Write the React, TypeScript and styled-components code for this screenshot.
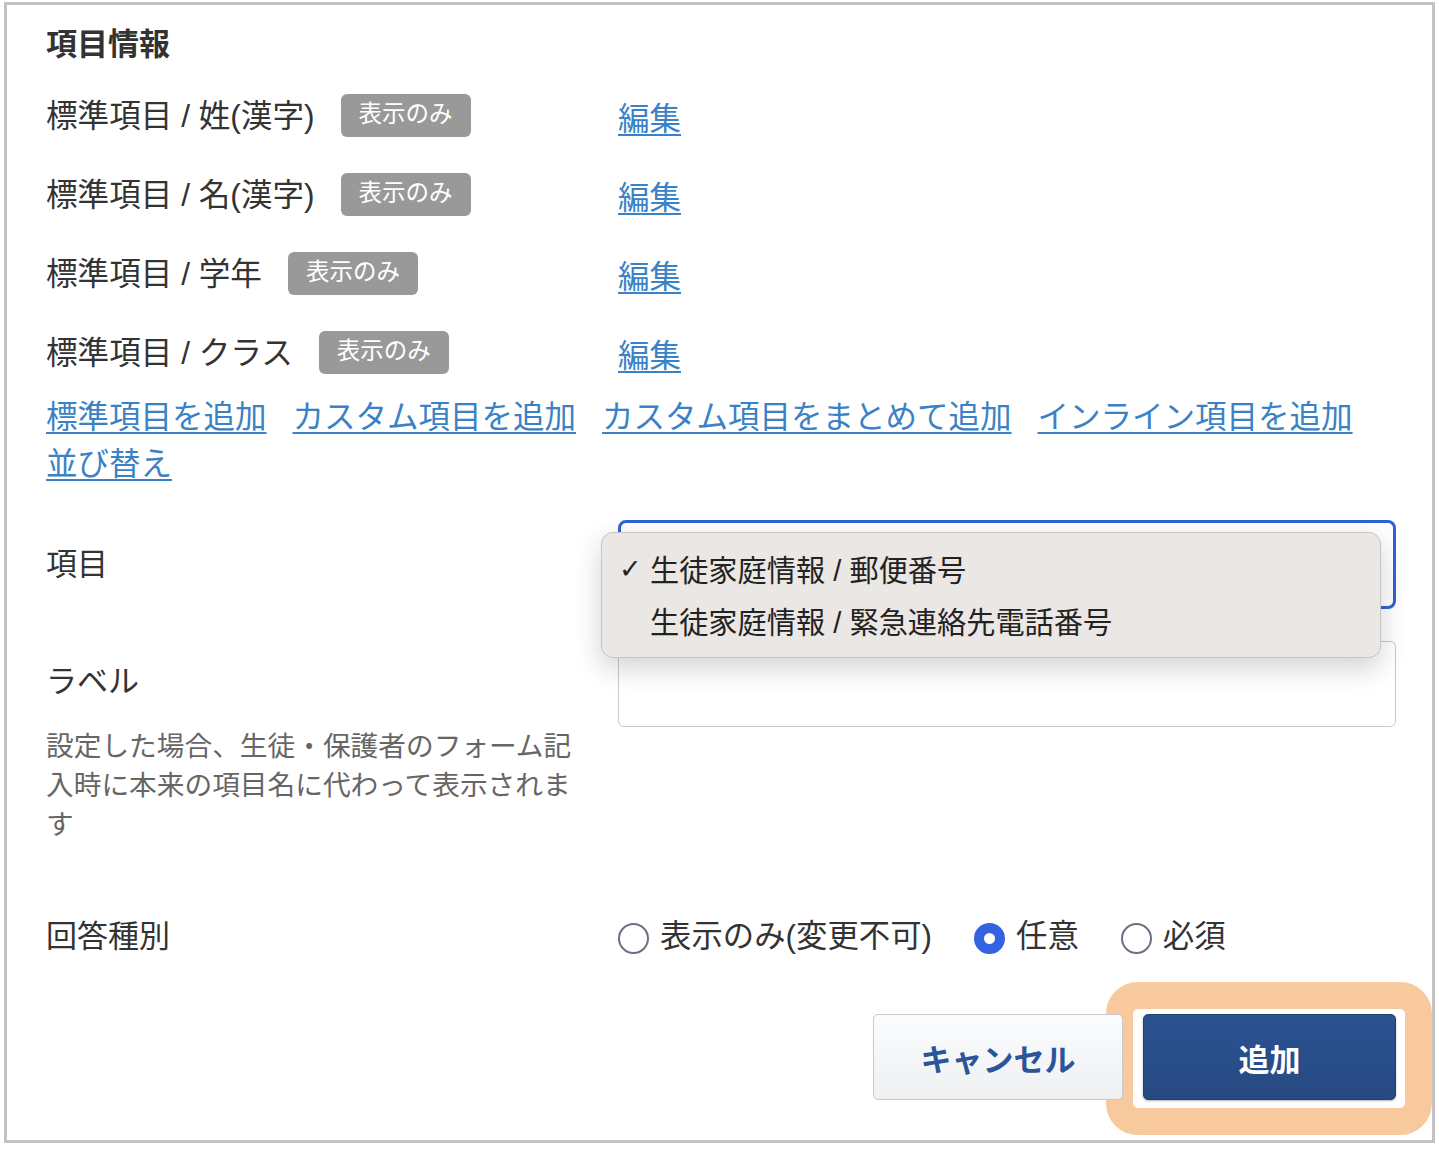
import * as React from "react";
import styled, { createGlobalStyle } from "styled-components";

const GlobalStyle = createGlobalStyle`
  html, body {
    margin: 0;
    padding: 0;
    background: #fff;
  }
  body {
    font-family: "Liberation Sans", "Noto Sans CJK JP", sans-serif;
    color: #333;
  }
`;

const Frame = styled.div`
  box-sizing: border-box;
  margin: 2px 0 0 4px;
  width: 1431px;
  height: 1141px;
  border: 3px solid #c2c2c2;
  padding: 20px 36px 0 39px;
  position: relative;
`;

const Title = styled.h2`
  margin: 0;
  font-size: 31px;
  line-height: 40px;
  font-weight: 700;
  color: #333;
`;

const ItemList = styled.div`
  margin-top: 11px;
`;

const ItemRow = styled.div`
  display: grid;
  grid-template-columns: 572px 1fr;
  align-items: center;
  height: 79px;
`;

const ItemName = styled.div`
  display: flex;
  align-items: center;
  font-size: 31.6px;
  line-height: 40px;
`;

const Badge = styled.span`
  display: inline-flex;
  align-items: center;
  justify-content: center;
  box-sizing: border-box;
  height: 43px;
  width: 130px;
  margin-left: 26px;
  padding-bottom: 3px;
  border-radius: 6px;
  background: #999;
  color: #fff;
  font-size: 23.5px;
`;

const Link = styled.a<{ $size?: number }>`
  color: #3a82c5;
  text-decoration: underline;
  text-decoration-thickness: 2px;
  text-underline-offset: 4px;
  font-size: ${(p) => p.$size ?? 31.5}px;
  cursor: pointer;
`;

const ActionLinks = styled.div`
  display: flex;
  flex-wrap: wrap;
  column-gap: 26px;
  line-height: 47px;
  margin-top: 2px;
`;

const FormRow = styled.div<{ $top: number; $align?: string }>`
  display: grid;
  grid-template-columns: 572px 778px;
  align-items: ${(p) => p.$align ?? "center"};
  margin-top: ${(p) => p.$top}px;
`;

const FieldLabel = styled.div`
  font-size: 31px;
  line-height: 40px;
`;

const LabelColumn = styled.div`
  padding-top: 21px;
`;

const HelpText = styled.p`
  margin: 25px 0 0;
  width: 535px;
  font-size: 27.7px;
  line-height: 39px;
  color: #666;
`;

const SelectBox = styled.div`
  box-sizing: border-box;
  height: 89px;
  border: 3px solid #2f62d6;
  border-radius: 8px;
  background: #fff;
  position: relative;
`;

const Popup = styled.ul`
  position: absolute;
  left: -20px;
  top: 9px;
  width: 780px;
  box-sizing: border-box;
  margin: 0;
  padding: 9px 0 11px 17px;
  list-style: none;
  background: #ebe7e4;
  border: 1px solid #c9c5c2;
  border-radius: 12px;
  box-shadow: 0 10px 28px rgba(0, 0, 0, 0.18);
  z-index: 5;
`;

const Option = styled.li`
  display: flex;
  align-items: center;
  height: 52px;
  font-size: 29.2px;
  color: #222;
`;

const Check = styled.span`
  display: inline-block;
  width: 31px;
  font-size: 27px;
  font-weight: 700;
  font-family: "DejaVu Sans", sans-serif;
`;

const TextInput = styled.input`
  box-sizing: border-box;
  width: 100%;
  height: 86px;
  border: 1px solid #c8c8c8;
  border-radius: 6px;
  outline: none;
  padding: 0 16px;
  font-size: 30px;
  font-family: inherit;
`;

const RadioGroup = styled.div`
  display: flex;
  align-items: center;
  gap: 42px;
  height: 50px;
`;

const RadioItem = styled.label`
  display: flex;
  align-items: center;
  gap: 11px;
  font-size: 31.4px;
  line-height: 40px;
`;

const RadioCircle = styled.span<{ $checked?: boolean }>`
  box-sizing: border-box;
  width: 31px;
  height: 31px;
  border-radius: 50%;
  border: ${(p) => (p.$checked ? "10px solid #3462e0" : "2px solid #6c7080")};
  background: #fff;
  margin-top: 3px;
`;

const ButtonBar = styled.div`
  display: flex;
  justify-content: flex-end;
  gap: 20px;
  margin-top: 52px;
`;

const Button = styled.button<{ $primary?: boolean }>`
  box-sizing: border-box;
  width: ${(p) => (p.$primary ? 253 : 250)}px;
  height: 86px;
  border-radius: 5px;
  font-family: inherit;
  font-size: 31px;
  font-weight: 700;
  cursor: pointer;
  position: relative;
  z-index: 1;
  border: 1px solid ${(p) => (p.$primary ? "#1f3f73" : "#c6cacf")};
  color: ${(p) => (p.$primary ? "#fff" : "#2a5599")};
  background: ${(p) =>
    p.$primary
      ? "linear-gradient(#2b5190, #274a83)"
      : "linear-gradient(#fbfcfd, #eef0f2)"};
  box-shadow: ${(p) => (p.$primary ? "0 1px 2px rgba(0,0,0,0.3)" : "none")};
`;

const HighlightWrap = styled.div`
  position: relative;
  display: flex;
`;

const Highlight = styled.span`
  position: absolute;
  left: -37px;
  right: -36px;
  top: -32px;
  bottom: -35px;
  border: 27px solid #f8c99c;
  border-radius: 32px;
  background: #fff;
`;

const items = [
  "標準項目 / 姓(漢字)",
  "標準項目 / 名(漢字)",
  "標準項目 / 学年",
  "標準項目 / クラス",
];

const actions = [
  "標準項目を追加",
  "カスタム項目を追加",
  "カスタム項目をまとめて追加",
  "インライン項目を追加",
  "並び替え",
];

const options = ["生徒家庭情報 / 郵便番号", "生徒家庭情報 / 緊急連絡先電話番号"];

const answerTypes = [
  { label: "表示のみ(変更不可)", checked: false },
  { label: "任意", checked: true },
  { label: "必須", checked: false },
];

function App(): React.ReactElement {
  return (
    <>
      <GlobalStyle />
      <Frame>
        <Title>項目情報</Title>
        <ItemList>
          {items.map((name, index) => (
            <ItemRow key={index}>
              <ItemName>
                {name}
                <Badge>表示のみ</Badge>
              </ItemName>
              <div>
                <Link>編集</Link>
              </div>
            </ItemRow>
          ))}
        </ItemList>
        <ActionLinks>
          {actions.map((label, index) => (
            <Link key={index}>{label}</Link>
          ))}
        </ActionLinks>

        <FormRow $top={32}>
          <FieldLabel>項目</FieldLabel>
          <SelectBox>
            <Popup>
              {options.map((opt, index) => (
                <Option key={index}>
                  <Check>{index === 0 ? "✓" : ""}</Check>
                  {opt}
                </Option>
              ))}
            </Popup>
          </SelectBox>
        </FormRow>

        <FormRow $top={32} $align="start">
          <LabelColumn>
            <FieldLabel>ラベル</FieldLabel>
            <HelpText>
              設定した場合、生徒・保護者のフォーム記入時に本来の項目名に代わって表示されます
            </HelpText>
          </LabelColumn>
          <TextInput />
        </FormRow>

        <FormRow $top={68}>
          <FieldLabel>回答種別</FieldLabel>
          <RadioGroup>
            {answerTypes.map((type, index) => (
              <RadioItem key={index}>
                <RadioCircle $checked={type.checked} />
                {type.label}
              </RadioItem>
            ))}
          </RadioGroup>
        </FormRow>

        <ButtonBar>
          <Button>キャンセル</Button>
          <HighlightWrap>
            <Highlight />
            <Button $primary>追加</Button>
          </HighlightWrap>
        </ButtonBar>
      </Frame>
    </>
  );
}

export default App;
